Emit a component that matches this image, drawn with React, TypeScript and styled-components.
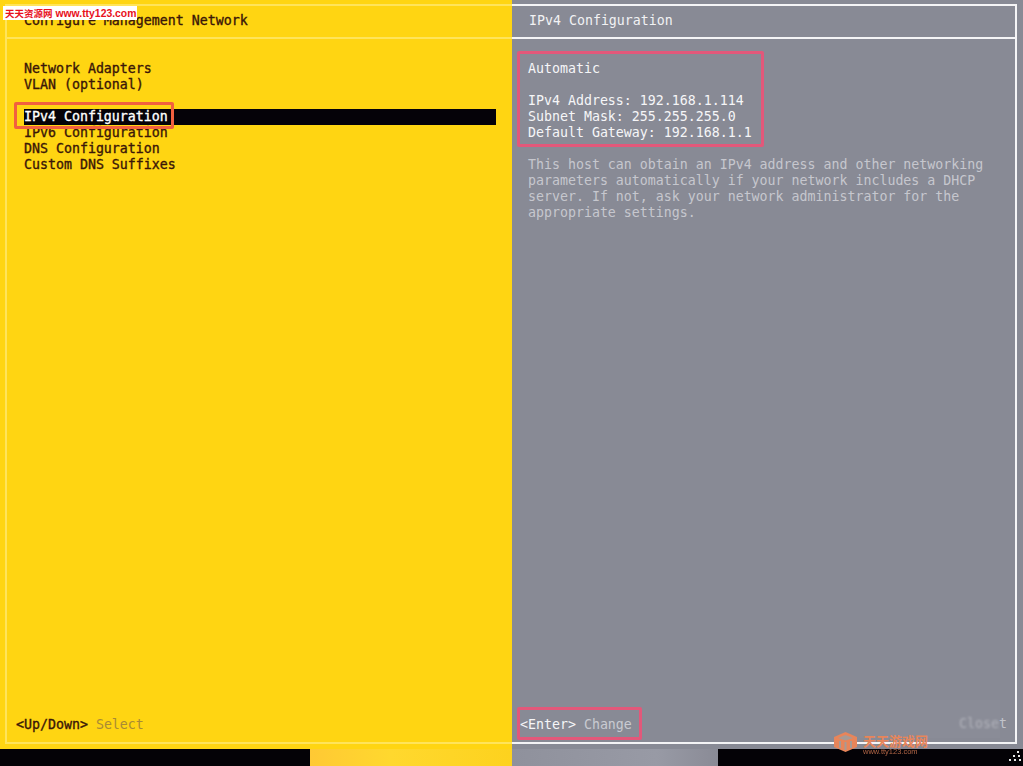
import styled, { createGlobalStyle } from "styled-components";

const GlobalStyle = createGlobalStyle`
  html, body {
    margin: 0;
    padding: 0;
    background: #000;
  }
`;

const Screen = styled.div`
  position: relative;
  width: 1023px;
  height: 766px;
  overflow: hidden;
  display: flex;
  flex-direction: column;
  font-family: "DejaVu Sans Mono", "Liberation Mono", monospace;
  font-size: 13.28px;
  line-height: 16px;
  white-space: pre;
`;

const Panels = styled.div`
  display: flex;
  height: 749px;
`;

const Panel = styled.section<{ $side: "left" | "right" }>`
  box-sizing: border-box;
  width: ${(p) => (p.$side === "left" ? "512px" : "511px")};
  height: 100%;
  padding: ${(p) => (p.$side === "left" ? "4px 0 5px 5px" : "4px 6px 5px 0")};
  background: ${(p) => (p.$side === "left" ? "#ffd512" : "#888a95")};
`;

const Frame = styled.div<{ $side: "left" | "right" }>`
  box-sizing: border-box;
  height: 100%;
  display: flex;
  flex-direction: column;
  border-style: solid;
  border-color: ${(p) => (p.$side === "left" ? "#ffe45a" : "#f4f4f6")};
  border-width: ${(p) => (p.$side === "left" ? "2px 0 2px 2px" : "2px 2px 2px 0")};
`;

const Header = styled.div<{ $side: "left" | "right" }>`
  box-sizing: border-box;
  height: 33px;
  padding: 7px 0 0 ${(p) => (p.$side === "left" ? "17px" : "17px")};
  color: ${(p) => (p.$side === "left" ? "#3a1608" : "#f2f2f4")};
  -webkit-text-stroke: ${(p) => (p.$side === "left" ? "0.35px #3a1608" : "0")};
  border-bottom: 2px solid ${(p) => (p.$side === "left" ? "#ffe45a" : "#f4f4f6")};
`;

const Menu = styled.ul`
  list-style: none;
  margin: 0;
  padding: 22px 0 0 17px;
  width: 472px;
`;

const MenuItem = styled.li<{ $selected?: boolean }>`
  height: 16px;
  color: ${(p) => (p.$selected ? "#ffffff" : "#3a1608")};
  -webkit-text-stroke: 0.35px ${(p) => (p.$selected ? "#ffffff" : "#3a1608")};
  background: ${(p) => (p.$selected ? "#050208" : "transparent")};
`;

const Detail = styled.div`
  padding: 22px 0 0 16px;
`;

const InfoLine = styled.div`
  height: 16px;
  color: #f6f6f8;
`;

const HelpText = styled.p`
  margin: 16px 0 0;
  color: #c6c7ce;
`;

const Footer = styled.div<{ $side: "left" | "right" }>`
  margin-top: auto;
  padding: 0 0 9px ${(p) => (p.$side === "left" ? "9px" : "8px")};
  display: flex;
  gap: 8px;
`;

const KeyName = styled.span<{ $side: "left" | "right" }>`
  color: ${(p) => (p.$side === "left" ? "#3a1608" : "#f6f6f8")};
  -webkit-text-stroke: ${(p) => (p.$side === "left" ? "0.35px #3a1608" : "0")};
`;

const KeyAction = styled.span<{ $side: "left" | "right" }>`
  color: ${(p) => (p.$side === "left" ? "#a98a35" : "#c9cad1")};
`;

const StatusStrip = styled.div`
  flex: 1;
  display: flex;
`;

const StripPart = styled.div<{ $width: number; $tone: "black" | "yellow" | "grey" }>`
  width: ${(p) => p.$width}px;
  background: ${(p) =>
    p.$tone === "black"
      ? "#040206"
      : p.$tone === "yellow"
        ? "linear-gradient(90deg, #ffc934, #ffd82e 40%, #fdd21e)"
        : "linear-gradient(90deg, #8f919c, #989aa5 70%, #8a8b96)"};
`;

const Annotation = styled.div<{ $x: number; $y: number; $w: number; $h: number; $color: string }>`
  position: absolute;
  box-sizing: border-box;
  left: ${(p) => p.$x}px;
  top: ${(p) => p.$y}px;
  width: ${(p) => p.$w}px;
  height: ${(p) => p.$h}px;
  border: 3px solid ${(p) => p.$color};
  border-radius: 2px;
`;

const SiteStamp = styled.div`
  position: absolute;
  left: 3px;
  top: 6px;
  width: 134px;
  height: 14px;
  background: #fff;
  color: #e8101c;
  font-family: "Liberation Sans", "Noto Sans CJK SC", sans-serif;
  font-size: 10.4px;
  font-weight: 700;
  line-height: 14px;
  padding-left: 2px;
  box-sizing: border-box;
  overflow: hidden;
`;

const StampBrand = styled.span`
  font-family: "Noto Sans CJK SC", sans-serif;
  font-size: 9.5px;
`;

const Smudged = styled.div`
  position: absolute;
  left: 959px;
  top: 716px;
  display: flex;
  color: #c2c3ca;
`;

const SmudgedWord = styled.span`
  filter: blur(1px);
  opacity: 0.7;
`;

const SmudgePatch = styled.div`
  position: absolute;
  left: 860px;
  top: 700px;
  width: 140px;
  height: 38px;
  background: rgba(150, 151, 160, 0.18);
`;

const GameMark = styled.div`
  position: absolute;
  left: 832px;
  top: 731px;
  display: flex;
  gap: 4px;
  color: #e8855a;
`;

const GameMarkText = styled.div`
  display: flex;
  flex-direction: column;
  padding-top: 3px;
`;

const GameMarkName = styled.span`
  font-family: "Noto Sans CJK SC", sans-serif;
  font-size: 13px;
  font-weight: 700;
  line-height: 13px;
`;

const GameMarkUrl = styled.span`
  font-family: "Liberation Sans", sans-serif;
  font-size: 7.5px;
  line-height: 9px;
  opacity: 0.75;
`;

const Dots = styled.svg`
  position: absolute;
  right: 1px;
  top: 751px;
`;

function CubeLogo() {
  return (
    <svg width="27" height="22" viewBox="0 0 27 22" fill="none">
      <path d="M13.5 1 L25 6 V16 L13.5 21 L2 16 V6 Z" fill="#e8855a" />
      <path d="M13.5 4 L21 7 L13.5 9.5 L6 7 Z" fill="#a89a94" />
      <path d="M8 10 V17 M13.5 11 V19 M19 10 V17" stroke="#a89a94" strokeWidth="2" />
    </svg>
  );
}

export default function App() {
  return (
    <Screen>
      <GlobalStyle />
      <Panels>
        <Panel $side="left">
          <Frame $side="left">
            <Header $side="left">Configure Management Network</Header>
            <Menu>
              <MenuItem>Network Adapters</MenuItem>
              <MenuItem>VLAN (optional)</MenuItem>
              <MenuItem />
              <MenuItem $selected>IPv4 Configuration</MenuItem>
              <MenuItem>IPv6 Configuration</MenuItem>
              <MenuItem>DNS Configuration</MenuItem>
              <MenuItem>Custom DNS Suffixes</MenuItem>
            </Menu>
            <Footer $side="left">
              <KeyName $side="left">{"<Up/Down>"}</KeyName>
              <KeyAction $side="left">Select</KeyAction>
            </Footer>
          </Frame>
        </Panel>
        <Panel $side="right">
          <Frame $side="right">
            <Header $side="right">IPv4 Configuration</Header>
            <Detail>
              <InfoLine>Automatic</InfoLine>
              <InfoLine />
              <InfoLine>IPv4 Address: 192.168.1.114</InfoLine>
              <InfoLine>Subnet Mask: 255.255.255.0</InfoLine>
              <InfoLine>Default Gateway: 192.168.1.1</InfoLine>
              <HelpText>
                {"This host can obtain an IPv4 address and other networking\nparameters automatically if your network includes a DHCP\nserver. If not, ask your network administrator for the\nappropriate settings."}
              </HelpText>
            </Detail>
            <Footer $side="right">
              <KeyName $side="right">{"<Enter>"}</KeyName>
              <KeyAction $side="right">Change</KeyAction>
            </Footer>
          </Frame>
        </Panel>
      </Panels>
      <StatusStrip>
        <StripPart $width={310} $tone="black" />
        <StripPart $width={202} $tone="yellow" />
        <StripPart $width={206} $tone="grey" />
        <StripPart $width={305} $tone="black" />
      </StatusStrip>

      <Annotation $x={14} $y={102} $w={160} $h={27} $color="#f2603f" />
      <Annotation $x={517} $y={51} $w={247} $h={96} $color="#e2587a" />
      <Annotation $x={517} $y={707} $w={125} $h={33} $color="#e2587a" />

      <SiteStamp>
        <StampBrand>天天资源网</StampBrand> www.tty123.com
      </SiteStamp>
      <SmudgePatch />
      <Smudged>
        <SmudgedWord>Close</SmudgedWord>t
      </Smudged>
      <GameMark>
        <CubeLogo />
        <GameMarkText>
          <GameMarkName>天天游戏网</GameMarkName>
          <GameMarkUrl>www.tty123.com</GameMarkUrl>
        </GameMarkText>
      </GameMark>
      <Dots width="14" height="12" viewBox="0 0 14 12" fill="#e8e8e8">
        <rect x="9" y="0" width="2" height="2" />
        <rect x="5" y="4" width="2" height="2" />
        <rect x="10" y="4" width="2" height="2" />
        <rect x="1" y="8" width="2" height="2" />
        <rect x="6" y="8" width="2" height="2" />
        <rect x="11" y="8" width="2" height="2" />
      </Dots>
    </Screen>
  );
}
